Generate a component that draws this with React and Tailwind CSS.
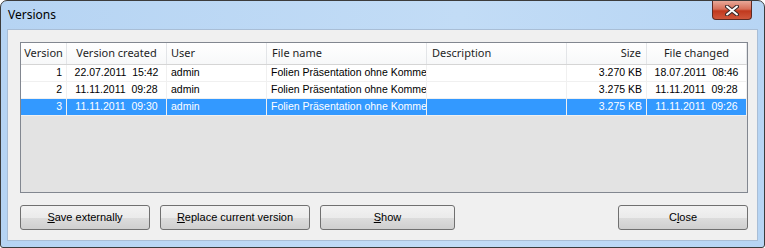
import React from 'react';

const rows = [
  { version: 1, created: '22.07.2011  15:42', user: 'admin', file: 'Folien Präsentation ohne Komme', desc: '', size: '3.270 KB', changed: '18.07.2011  08:46' },
  { version: 2, created: '11.11.2011  09:28', user: 'admin', file: 'Folien Präsentation ohne Komme', desc: '', size: '3.275 KB', changed: '11.11.2011  09:28' },
  { version: 3, created: '11.11.2011  09:30', user: 'admin', file: 'Folien Präsentation ohne Komme', desc: '', size: '3.275 KB', changed: '11.11.2011  09:26', selected: true },
];

// column widths line up with the header separators
const cols = [
  { key: 'version', label: 'Version', w: 'w-[46px]', head: 'justify-center', cell: 'justify-end pr-[4px]' },
  { key: 'created', label: 'Version created', w: 'w-[100px]', head: 'justify-center', cell: 'justify-center' },
  { key: 'user', label: 'User', w: 'w-[100px]', head: 'justify-start pl-[4px]', cell: 'justify-start pl-[4px]' },
  { key: 'file', label: 'File name', w: 'w-[160px]', head: 'justify-start pl-[5px]', cell: 'justify-start pl-[4px]' },
  { key: 'desc', label: 'Description', w: 'w-[140px]', head: 'justify-start pl-[5px]', cell: 'justify-start pl-[4px]' },
  { key: 'size', label: 'Size', w: 'w-[80px]', head: 'justify-end pr-[5px]', cell: 'justify-end pr-[4px]' },
  { key: 'changed', label: 'File changed', w: 'flex-1', head: 'justify-center', cell: 'justify-center' },
];

const Button = ({ width, pre = '', hotkey, rest }) => (
  <button className={`${width} h-[25px] rounded-[3px] border border-[#707070] bg-[linear-gradient(#f2f2f2_0%,#ebebeb_50%,#dddddd_50%,#cfcfcf_100%)] text-[11px] text-black font-['Liberation_Sans',sans-serif] flex items-center justify-center`}>
    <span>{pre}<span className="underline">{hotkey}</span>{rest}</span>
  </button>
);

const CloseX = () => (
  <div className="w-[40px] h-[19px] rounded-b-[4px] border border-t-0 border-[#5e2a22] bg-[linear-gradient(#e8a898_0%,#d66f59_45%,#c1391e_55%,#d0573c_100%)] flex items-center justify-center">
    <svg width="14" height="11" viewBox="0 0 14 11">
      <path d="M2 1.5 L12 9.5 M12 1.5 L2 9.5" stroke="#3a2a2a" strokeWidth="4" strokeLinecap="round" />
      <path d="M2 1.5 L12 9.5 M12 1.5 L2 9.5" stroke="#ffffff" strokeWidth="2" strokeLinecap="round" />
    </svg>
  </div>
);

export default function App() {
  return (
    <div className="w-[765px] h-[248px] bg-white">
      <div className="w-[765px] h-[248px] rounded-t-[7px] rounded-b-[3px] border border-[#3c3c3c] bg-[linear-gradient(90deg,#b6d4f3,#c2dcf6_60%,#b7d5f4)] flex flex-col">
        {/* Title bar */}
        <div className="h-[28px] flex items-start justify-between pl-[7px] pr-[12px]">
          <span className="mt-[5px] text-[12px] text-black font-['Noto_Sans',sans-serif]">Versions</span>
          <CloseX />
        </div>

        {/* Client area */}
        <div className="mx-[6px] mb-[6px] flex-1 border border-[#a9bed6] bg-[#f0f0f0] flex flex-col pl-[12px] pr-[9px] pt-[12px] pb-[8px]">
          {/* List view */}
          <div className="h-[151px] border border-[#828790] bg-[#e3e3e3] flex flex-col">
            <div className="h-[22px] bg-[linear-gradient(#ffffff,#f7f8f9)] border-b border-[#d5d5d5] flex text-[11px] text-[#1e1e1e] font-['Noto_Sans',sans-serif]">
              {cols.map((c) => (
                <div key={c.key} className={`${c.w} h-full flex items-center border-r border-[#e3e5e8] ${c.head}`}>
                  {c.label}
                </div>
              ))}
            </div>
            {rows.map((r) => (
              <div
                key={r.version}
                className={`h-[17px] flex border-b border-[#f0f0f0] text-[10.5px] font-['Liberation_Sans',sans-serif] ${r.selected ? 'bg-[#3399ff] text-white' : 'bg-white text-black'}`}
              >
                {cols.map((c) => (
                  <div key={c.key} className={`${c.w} h-full flex items-center overflow-hidden whitespace-nowrap border-r border-[#f0f0f0] ${c.cell}`}>
                    <span className="whitespace-pre">{r[c.key]}</span>
                  </div>
                ))}
              </div>
            ))}
          </div>

          {/* Buttons */}
          <div className="mt-[12px] flex items-center">
            <Button width="w-[130px]" hotkey="S" rest="ave externally" />
            <div className="ml-[10px]"><Button width="w-[150px]" hotkey="R" rest="eplace current version" /></div>
            <div className="ml-[10px]"><Button width="w-[135px]" hotkey="S" rest="how" /></div>
            <div className="ml-auto"><Button width="w-[130px]" pre="C" hotkey="l" rest="ose" /></div>
          </div>
        </div>
      </div>
    </div>
  );
}
